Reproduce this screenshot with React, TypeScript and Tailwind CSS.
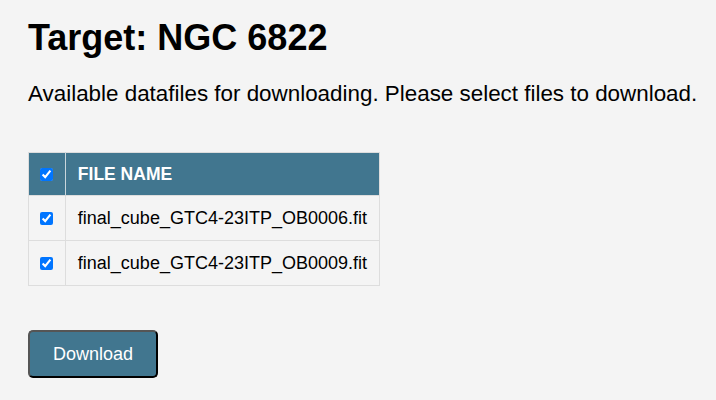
const files = ["final_cube_GTC4-23ITP_OB0006.fit", "final_cube_GTC4-23ITP_OB0009.fit"];

const App = () => {
  return (
    <div className="min-h-[400px] w-[716px] bg-[#f4f4f4] px-[28px] pt-[13px] font-['Liberation_Sans',Arial,sans-serif] text-black">
      <h1 className="text-[36px] font-bold leading-[50px]">Target: NGC 6822</h1>
      <p className="mt-[18px] whitespace-nowrap text-[22.4px] leading-[26px]">
        Available datafiles for downloading. Please select files to download.
      </p>
      <table className="mt-[45px] w-[352px] border-collapse border border-[#dddddd]">
        <thead>
          <tr className="h-[43px] bg-[#41768f] text-white">
            <th className="w-[39px] border-r border-[#c9d6dc]">
              <input type="checkbox" defaultChecked className="m-0 block mx-auto size-[13px] accent-[#0075ff]" />
            </th>
            <th className="px-[12px] text-left text-[17.5px] font-bold whitespace-nowrap">FILE NAME</th>
          </tr>
        </thead>
        <tbody>
          {files.map((f) => {
            return (
              <tr key={f} className="h-[45px] border-t border-[#dddddd]">
                <td className="border-r border-[#dddddd]">
                  <input type="checkbox" defaultChecked className="m-0 block mx-auto size-[13px] accent-[#0075ff]" />
                </td>
                <td className="px-[12px] text-[18px] whitespace-nowrap">{f}</td>
              </tr>
            );
          })}
        </tbody>
      </table>
      <button className="mt-[44px] h-[48px] w-[130px] rounded-[5px] border-2 border-[#555] border-b-black border-r-black bg-[#41768f] text-[18px] text-white">
        Download
      </button>
    </div>
  );
};

export default App;
